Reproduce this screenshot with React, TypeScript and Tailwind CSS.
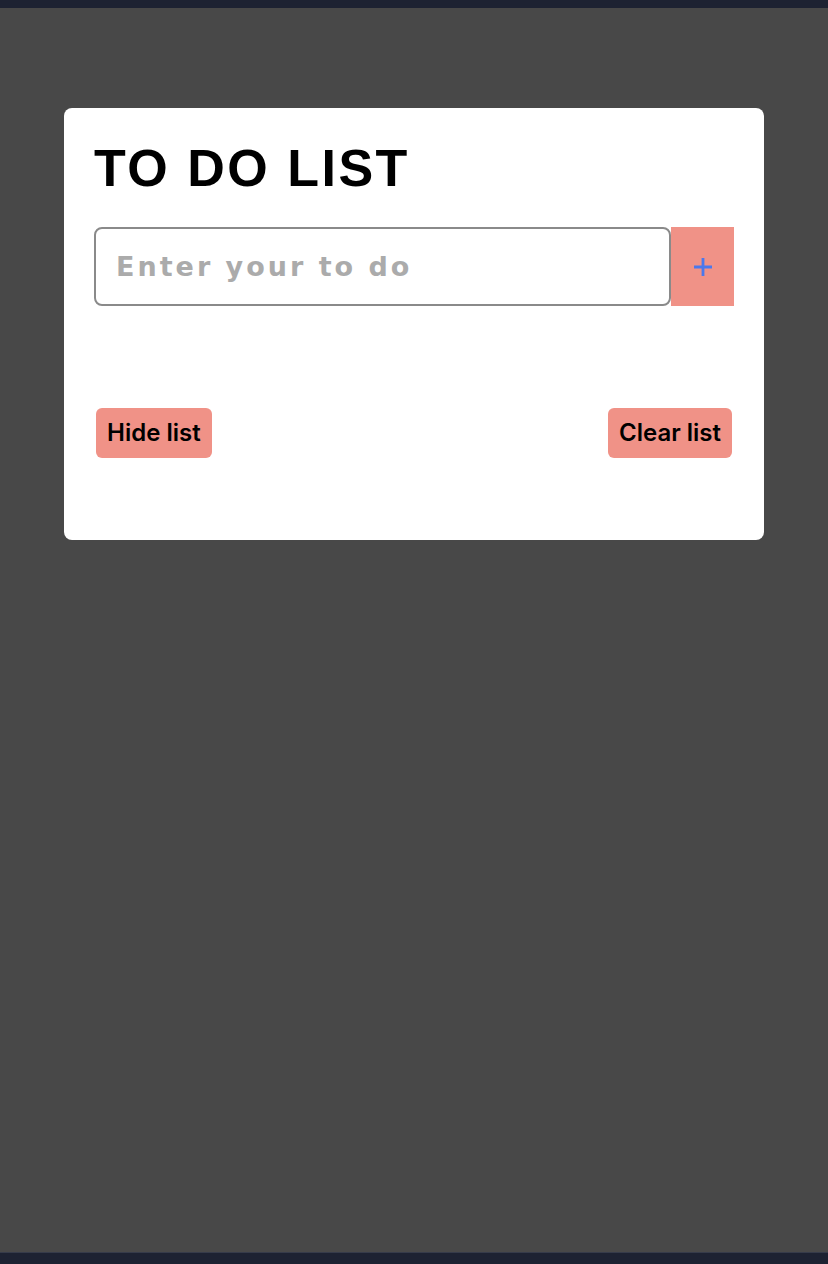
import { useState } from 'react'

export default function App() {
  const [todo, setTodo] = useState('')

  return (
    <div className="flex h-[1264px] flex-col bg-[#1d2232]">
      <div className="h-[8px] shrink-0" />
      <main className="flex-1 bg-[#484848] px-[64px] pt-[100px] border-b border-[#363b4a]">
        <div className="flex flex-col rounded-[8px] bg-white px-[30px] pt-[34px] pb-[82px] font-['Liberation_Sans',Arial,sans-serif]">
          <h1 className="text-[52px] font-bold leading-[52px] tracking-[2.5px] text-black">TO DO LIST</h1>

          {/* Input row */}
          <div className="mt-[33px] flex h-[79px]">
            <input
              value={todo}
              onChange={(e) => setTodo(e.target.value)}
              placeholder="Enter your to do"
              className="h-full flex-1 rounded-[8px] border-2 border-[#8a8a8a] px-[20px] font-['DejaVu_Sans',sans-serif] text-[27px] font-bold tracking-[3px] text-black outline-none placeholder:text-[#ababab]"
            />
            <button className="flex h-full w-[63px] items-center justify-center bg-[#f09287]">
              <svg width="20" height="20" viewBox="0 0 20 20" fill="none" stroke="#4b78ec" strokeWidth="2.8" strokeLinecap="butt">
                <path d="M10 1v18M1 10h18" />
              </svg>
            </button>
          </div>

          {/* Actions */}
          <div className="mt-[102px] flex items-center justify-between px-[2px] font-['Inter',sans-serif]">
            <button className="h-[50px] rounded-[6px] bg-[#f09287] px-[11px] text-[24px] font-semibold text-black">
              Hide list
            </button>
            <button className="h-[50px] rounded-[6px] bg-[#f09287] px-[11px] text-[24px] font-semibold text-black">
              Clear list
            </button>
          </div>
        </div>
      </main>
      <div className="h-[11px] shrink-0" />
    </div>
  )
}
